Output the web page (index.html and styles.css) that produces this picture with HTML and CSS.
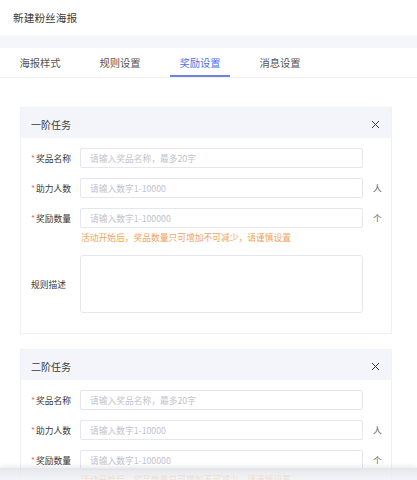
FILE: index.html
```html
<!DOCTYPE html>
<html lang="zh">
<head>
<meta charset="utf-8">
<title>新建粉丝海报</title>
<link rel="stylesheet" href="styles.css">
</head>
<body>
<div class="header">新建粉丝海报</div>
<div class="band"></div>
<div class="tabs">
  <div class="tab">海报样式</div>
  <div class="tab">规则设置</div>
  <div class="tab active">奖励设置</div>
  <div class="tab">消息设置</div>
</div>
<div class="content">
  <div class="card">
    <div class="card-head">
      <span>一阶任务</span>
      <svg class="close" width="9" height="9" viewBox="0 0 9 9"><path d="M1 1L8 8M8 1L1 8" stroke="#3a3a3a" stroke-width="1" fill="none"/></svg>
    </div>
    <div class="card-body">
      <div class="row"><label class="label"><i>*</i>奖品名称</label><input class="input" placeholder="请输入奖品名称，最多20字"></div>
      <div class="row"><label class="label"><i>*</i>助力人数</label><input class="input" placeholder="请输入数字1-10000"><span class="unit">人</span></div>
      <div class="row tight"><label class="label"><i>*</i>奖励数量</label><input class="input" placeholder="请输入数字1-100000"><span class="unit">个</span></div>
      <div class="warn">活动开始后，奖品数量只可增加不可减少，请谨慎设置</div>
      <div class="row area"><label class="label">规则描述</label><textarea class="textarea"></textarea></div>
    </div>
  </div>
  <div class="card">
    <div class="card-head">
      <span>二阶任务</span>
      <svg class="close" width="9" height="9" viewBox="0 0 9 9"><path d="M1 1L8 8M8 1L1 8" stroke="#3a3a3a" stroke-width="1" fill="none"/></svg>
    </div>
    <div class="card-body">
      <div class="row"><label class="label"><i>*</i>奖品名称</label><input class="input" placeholder="请输入奖品名称，最多20字"></div>
      <div class="row"><label class="label"><i>*</i>助力人数</label><input class="input" placeholder="请输入数字1-10000"><span class="unit">人</span></div>
      <div class="row tight"><label class="label"><i>*</i>奖励数量</label><input class="input" placeholder="请输入数字1-100000"><span class="unit">个</span></div>
      <div class="warn">活动开始后，奖品数量只可增加不可减少，请谨慎设置</div>
      <div class="row area"><label class="label">规则描述</label><textarea class="textarea"></textarea></div>
    </div>
  </div>
</div>
<div class="footer-shade"></div>
</body>
</html>
```

FILE: styles.css
```css
html, body {
  margin: 0;
  padding: 0;
  background: #ffffff;
  font-family: "Noto Sans CJK SC", "Noto Sans", sans-serif;
  color: #333333;
}

.header {
  height: 35px;
  display: flex;
  align-items: center;
  padding-left: 13px;
  font-size: 10.7px;
  color: #3a3a3a;
}

.band {
  height: 13px;
  background: #f5f6fa;
}

.tabs {
  display: flex;
  height: 29px;
  border-bottom: 1px solid #eef0f4;
}

.tab {
  width: 60px;
  margin: 0 10px;
  display: flex;
  align-items: center;
  justify-content: center;
  font-size: 10.3px;
  color: #555;
  border-bottom: 2px solid transparent;
  padding-top: 1px;
}

.tab.active {
  color: #4a72f0;
  border-bottom-color: #6f80e6;
}

.content {
  padding: 29px 25px 40px 20px;
}

.card {
  border: 1px solid #f0f1f4;
  margin-bottom: 15px;
}

.card-head {
  height: 30px;
  background: #f3f5fb;
  display: flex;
  align-items: center;
  justify-content: space-between;
  padding: 2px 11px 0 10px;
  box-sizing: border-box;
  font-size: 10px;
  color: #3a3a3a;
}

.card-body {
  padding: 10px 0 20px 0;
}

.row {
  display: flex;
  align-items: center;
  height: 20px;
  margin-bottom: 10px;
}

.row.tight {
  margin-bottom: 4px;
}

.label {
  width: 49px;
  padding-left: 10px;
  font-size: 8.75px;
  color: #3a3a3a;
  white-space: nowrap;
}

.label i {
  font-style: normal;
  color: #f56c6c;
  margin-right: 1px;
}

.input {
  width: 283px;
  height: 20px;
  box-sizing: border-box;
  border: 1px solid #e4e7ed;
  border-radius: 2px;
  padding: 0 0 0 9px;
  font-family: inherit;
  font-size: 8.75px;
  outline: none;
}

.input::placeholder {
  color: #bfc3cb;
}

.unit {
  margin-left: 10px;
  font-size: 8.75px;
  color: #666;
}

.warn {
  margin-left: 60px;
  font-size: 8.75px;
  line-height: 12px;
  color: #f2a35e;
  margin-bottom: 11px;
}

.row.area {
  height: 58px;
  margin-bottom: 0;
}

.textarea {
  width: 283px;
  height: 58px;
  box-sizing: border-box;
  border: 1px solid #e4e7ed;
  border-radius: 3px;
  resize: none;
  outline: none;
  margin: 0;
}

.footer-shade {
  position: fixed;
  left: 0;
  right: 0;
  bottom: 0;
  height: 12px;
  background: linear-gradient(rgba(225, 226, 230, 0.85), rgba(240, 241, 244, 0.75));
  box-shadow: 0 -2px 4px rgba(0, 0, 0, 0.08);
}
```
